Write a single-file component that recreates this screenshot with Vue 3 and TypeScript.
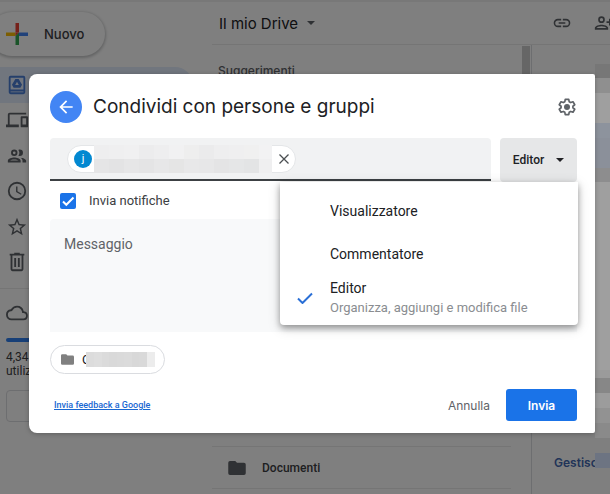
<script setup lang="ts">
import { computed, ref } from 'vue'

interface Role {
  id: string
  label: string
  description?: string
}

interface NavItem {
  label: string
  path: string
  active?: boolean
}

interface Tile {
  height: number
  color: string
}

const roles: Role[] = [
  { id: 'viewer', label: 'Visualizzatore' },
  { id: 'commenter', label: 'Commentatore' },
  { id: 'editor', label: 'Editor', description: 'Organizza, aggiungi e modifica file' },
]

const navItems: NavItem[] = [
  {
    label: 'Il mio Drive',
    active: true,
    path: 'M19 2H5a2 2 0 0 0-2 2v16a2 2 0 0 0 2 2h14a2 2 0 0 0 2-2V4a2 2 0 0 0-2-2zm0 18H5v-1h14v1zm0-3H5V4h14v13zM10.2 5.5h3.6l3.7 6.3-1.8 3.2H8.3l-1.8-3.2 3.7-6.3zm1.8 3-2 3.5h4l-2-3.5z',
  },
  {
    label: 'Computer',
    path: 'M4 6h18V4H4a2 2 0 0 0-2 2v11H0v3h14v-3H4V6zm19 2h-6a1 1 0 0 0-1 1v10a1 1 0 0 0 1 1h6a1 1 0 0 0 1-1V9a1 1 0 0 0-1-1zm-1 9h-4v-7h4v7z',
  },
  {
    label: 'Condivisi con me',
    path: 'M9 13.75c-2.34 0-7 1.17-7 3.5V19h14v-1.75c0-2.33-4.66-3.5-7-3.5zM4.34 17c.84-.58 2.87-1.25 4.66-1.25s3.82.67 4.66 1.25H4.34zM9 12a3.5 3.5 0 1 0 0-7 3.5 3.5 0 0 0 0 7zm0-5a1.5 1.5 0 1 1 0 3 1.5 1.5 0 0 1 0-3zm7.04 6.81c1.16.84 1.96 1.96 1.96 3.44V19h4v-1.75c0-2.02-3.5-3.17-5.96-3.44zM15 12a3.5 3.5 0 1 0 0-7c-.54 0-1.04.13-1.5.35a5.48 5.48 0 0 1 0 6.3c.46.22.96.35 1.5.35z',
  },
  {
    label: 'Recenti',
    path: 'M12 2a10 10 0 1 0 0 20 10 10 0 0 0 0-20zm0 18a8 8 0 1 1 0-16 8 8 0 0 1 0 16zm.5-13H11v6l5.25 3.15.75-1.23-4.5-2.67V7z',
  },
  {
    label: 'Speciali',
    path: 'm22 9.24-7.19-.62L12 2 9.19 8.63 2 9.24l5.46 4.73L5.82 21 12 17.27 18.18 21l-1.63-7.03L22 9.24zM12 15.4l-3.76 2.27 1-4.28-3.32-2.88 4.38-.38L12 6.1l1.71 4.04 4.38.38-3.32 2.88 1 4.28L12 15.4z',
  },
  {
    label: 'Cestino',
    path: 'M15 3V2H9v1H4v2h1v15a2 2 0 0 0 2 2h10a2 2 0 0 0 2-2V5h1V3h-5zm2 17H7V5h10v15zM9 7.5h2v10H9v-10zm4 0h2v10h-2v-10z',
  },
]

const nameTiles: string[] = [
  '#eeeeef', '#efeff0', '#f0f0f1', '#ececed', '#eeeeef', '#f1f1f2', '#eeeeee', '#ebebec', '#eeeeef', '#efeff0', '#f0f0f0', '#f2f2f3',
  '#e5e5e6', '#e3e3e4', '#e6e6e7', '#e4e4e5', '#e7e7e8', '#e5e5e5', '#e8e8e9', '#e7e7e8', '#e4e4e5', '#e5e6e7', '#e3e4e5', '#efeff0',
]

const folderTiles: string[] = ['#dcdcdc', '#dedede', '#dbdbdb', '#d9d9d9', '#dadada', '#dbdbdb', '#d8d8d8', '#d9d9d9', '#ececec']

const edgeTiles: Tile[] = [
  { height: 14, color: '#777777' },
  { height: 15, color: '#8f8f8f' },
  { height: 30, color: '#9f9f9f' },
  { height: 15, color: '#8d939d' },
  { height: 30, color: '#8b909a' },
  { height: 14, color: '#8d8d8e' },
  { height: 188, color: '#9f9f9f' },
  { height: 8, color: '#9b9b9b' },
  { height: 15, color: '#878787' },
  { height: 15, color: '#9c9c9c' },
  { height: 15, color: '#929292' },
  { height: 15, color: '#8a8a8a' },
  { height: 15, color: '#7f7f7f' },
  { height: 15, color: '#6d7482' },
  { height: 26, color: '#7f7f7f' },
]

const selectedId = ref('editor')
const menuOpen = ref(true)
const notify = ref(true)
const message = ref('')
const recipient = ref('')

const selectedRole = computed(() => roles.find((r) => r.id === selectedId.value) ?? roles[0])

function choose(role: Role): void {
  selectedId.value = role.id
  menuOpen.value = false
}
</script>

<template>
  <div class="page">
    <div class="drive">
      <aside class="sidebar">
        <button class="new-button" type="button">
          <svg class="plus" viewBox="0 0 22 22" aria-hidden="true">
            <path fill="#ea4335" d="M9.500 0h3.500v9.500H9.500z" />
            <path fill="#4285f4" d="M13 9.500h9V13h-9z" />
            <path fill="#34a853" d="M9.500 13H13v9H9.500z" />
            <path fill="#fbbc04" d="M0 9.500h9.500V13H0z" />
            <path fill="#ea4335" d="M9.500 9.500H13L9.500 13z" />
            <path fill="#34a853" d="M13 9.500V13H9.500z" />
          </svg>
          <span>Nuovo</span>
        </button>
        <nav class="nav">
          <a
            v-for="item in navItems"
            :key="item.label"
            class="nav-item"
            :class="{ active: item.active }"
            href="#"
            :aria-label="item.label"
          >
            <svg class="icon" viewBox="0 0 24 24" aria-hidden="true"><path :d="item.path" /></svg>
          </a>
        </nav>
        <div class="storage">
          <svg class="icon cloud" viewBox="0 0 24 24" aria-hidden="true">
            <path d="M19.35 10.04A7.49 7.49 0 0 0 12 4C9.11 4 6.6 5.64 5.35 8.04A5.99 5.99 0 0 0 0 14a6 6 0 0 0 6 6h13a5 5 0 0 0 .35-9.96zM19 18H6a4 4 0 0 1-.44-7.97l1.07-.11.5-.95A5.47 5.47 0 0 1 12 6c2.62 0 4.88 1.86 5.39 4.43l.3 1.5 1.53.11A2.98 2.98 0 0 1 22 15c0 1.65-1.35 3-3 3z" />
          </svg>
          <div class="meter"></div>
          <p class="usage">4,34 GB<br />utilizzati</p>
          <button class="buy" type="button" aria-label="Spazio"></button>
        </div>
      </aside>

      <div class="content">
        <header class="toolbar">
          <button class="crumb" type="button">
            <span>Il mio Drive</span>
            <svg class="caret" viewBox="0 0 10 5" aria-hidden="true"><path d="M0 0h10L5 5z" /></svg>
          </button>
          <div class="tools">
            <svg class="icon tool" viewBox="0 0 24 24" aria-hidden="true">
              <path d="M3.9 12c0-1.71 1.39-3.1 3.1-3.1h4V7H7a5 5 0 0 0 0 10h4v-1.900H7A3.100 3.100 0 0 1 3.900 12zM8 13h8v-2H8v2zm9-6h-4v1.900h4a3.100 3.100 0 0 1 0 6.200h-4V17h4a5 5 0 0 0 0-10z" />
            </svg>
            <svg class="icon tool" viewBox="0 0 24 24" aria-hidden="true">
              <path d="M9 12a4 4 0 1 0 0-8 4 4 0 0 0 0 8zm0-6a2 2 0 1 1 0 4 2 2 0 0 1 0-4zm0 8c-2.67 0-8 1.34-8 4v2h16v-2c0-2.66-5.33-4-8-4zm-6 4c.22-.72 3.31-2 6-2s5.8 1.29 6 2H3zM20 10V7h-2v3h-3v2h3v3h2v-3h3v-2h-3z" />
            </svg>
          </div>
        </header>
        <div class="body">
          <main class="files">
            <h2 class="suggested">Suggerimenti</h2>
            <div class="scroll-thumb"></div>
            <div class="file-row">
              <svg class="icon folder-big" viewBox="2 4 20 16" aria-hidden="true">
                <path d="M10 4H4a2 2 0 0 0-2 2v12a2 2 0 0 0 2 2h16a2 2 0 0 0 2-2V8a2 2 0 0 0-2-2h-8l-2-2z" />
              </svg>
              <span>Documenti</span>
            </div>
          </main>
          <aside class="details">
            <a href="#" class="manage">Gestisci</a>
          </aside>
        </div>
      </div>
    </div>

    <div class="backdrop">
      <div class="edge" aria-hidden="true">
        <i v-for="(tile, i) in edgeTiles" :key="i" :style="{ height: tile.height + 'px', background: tile.color }"></i>
      </div>
      <section class="dialog" role="dialog" aria-labelledby="dialog-title">
        <header class="dialog-head">
          <button class="back" type="button" aria-label="Indietro">
            <svg viewBox="0 0 24 24" aria-hidden="true"><path d="M20 11H7.83l5.59-5.59L12 4l-8 8 8 8 1.41-1.41L7.83 13H20v-2z" /></svg>
          </button>
          <h1 id="dialog-title">Condividi con persone e gruppi</h1>
          <button class="gear" type="button" aria-label="Impostazioni">
            <svg viewBox="0 0 24 24" aria-hidden="true">
              <path
                d="M9.9 2.8h4.2l.5 2.8 1.9 1.1 2.7-1 2.1 3.6-2.2 1.8v1.8l2.2 1.8-2.1 3.6-2.7-1-1.9 1.1-.5 2.8H9.9l-.5-2.8-1.9-1.1-2.7 1-2.1-3.6 2.2-1.8v-1.8L2.7 9.3l2.1-3.6 2.7 1 1.9-1.1z"
                fill="none"
                stroke="currentColor"
                stroke-width="2"
                stroke-linejoin="round"
              />
              <circle cx="12" cy="12" r="3.6" />
            </svg>
          </button>
        </header>

        <div class="share-row">
          <div class="people">
            <div class="person">
              <span class="avatar">j</span>
              <span class="name-tiles" aria-hidden="true">
                <i v-for="(color, i) in nameTiles" :key="i" :style="{ background: color }"></i>
              </span>
              <button class="remove" type="button" aria-label="Rimuovi">
                <svg viewBox="0 0 12 12" aria-hidden="true"><path d="M1.5 1.5l9 9M10.5 1.5l-9 9" /></svg>
              </button>
            </div>
            <input v-model="recipient" class="people-input" type="text" aria-label="Aggiungi persone" />
          </div>
          <div class="role">
            <button
              class="role-button"
              type="button"
              aria-haspopup="listbox"
              :aria-expanded="menuOpen"
              @click="menuOpen = !menuOpen"
            >
              <span>{{ selectedRole.label }}</span>
              <svg viewBox="0 0 8 4" aria-hidden="true"><path d="M0 0h8L4 4z" /></svg>
            </button>
            <div v-if="menuOpen" class="menu" role="listbox" aria-label="Ruolo">
              <button
                v-for="role in roles"
                :key="role.id"
                class="option"
                type="button"
                role="option"
                :aria-selected="role.id === selectedId"
                @click="choose(role)"
              >
                <span class="tick">
                  <svg v-if="role.id === selectedId" viewBox="0 0 16 12" aria-hidden="true"><path d="M1 6.5l4.5 4.5L15 1.5" /></svg>
                </span>
                <span class="option-text">
                  <span>{{ role.label }}</span>
                  <small v-if="role.description">{{ role.description }}</small>
                </span>
              </button>
            </div>
          </div>
        </div>

        <label class="notify">
          <input v-model="notify" type="checkbox" />
          <svg class="box" viewBox="0 0 16 16" aria-hidden="true"><path v-if="notify" d="M3 8.5l3.3 3.3L13.5 4.5" /></svg>
          <span>Invia notifiche</span>
        </label>

        <textarea v-model="message" class="message" placeholder="Messaggio" aria-label="Messaggio"></textarea>

        <div class="item-chip">
          <svg class="folder-small" viewBox="2 4 20 16" aria-hidden="true">
            <path d="M10 4H4a2 2 0 0 0-2 2v12a2 2 0 0 0 2 2h16a2 2 0 0 0 2-2V8a2 2 0 0 0-2-2h-8l-2-2z" />
          </svg>
          <span class="item-name">C</span>
          <span class="item-tiles" aria-hidden="true">
            <i v-for="(color, i) in folderTiles" :key="i" :style="{ background: color }"></i>
          </span>
        </div>

        <footer class="dialog-foot">
          <a href="#" class="feedback">Invia feedback a Google</a>
          <button class="cancel" type="button">Annulla</button>
          <button class="send" type="button">Invia</button>
        </footer>
      </section>
    </div>
  </div>
</template>

<style>
body {
  margin: 0;
}
</style>

<style scoped>
.page,
.page * {
  box-sizing: border-box;
}

.page {
  position: relative;
  height: 100vh;
  overflow: hidden;
  font-family: Roboto, 'Liberation Sans', sans-serif;
  color: #202124;
}

button {
  border: 0;
  padding: 0;
  background: none;
  font: inherit;
  color: inherit;
  cursor: pointer;
}

.icon {
  fill: #5f6368;
  width: 22px;
  height: 22px;
  flex: none;
}

.drive {
  display: flex;
  height: 100%;
  background: #fff;
  border-top: 2px solid #f0f0f0;
}

.sidebar {
  width: 212px;
  flex: none;
  display: flex;
  flex-direction: column;
  padding-top: 10px;
}

.new-button {
  display: flex;
  align-items: center;
  gap: 16px;
  width: 115px;
  height: 44px;
  margin-left: -10px;
  padding-left: 16px;
  border-radius: 22px;
  box-shadow: 0 1px 3px 1px rgba(60, 64, 67, 0.3);
  font: 500 13px Inter, Roboto, sans-serif;
  color: #3c4043;
}

.plus {
  width: 22px;
  height: 22px;
}

.nav {
  display: flex;
  flex-direction: column;
  height: 233px;
  padding: 11px 19px 8px 0;
  border-bottom: 1px solid #ebebeb;
}

.nav-item {
  display: flex;
  flex: 1;
  align-items: center;
  padding-left: 6px;
  border-radius: 0 18px 18px 0;
}

.nav-item.active {
  background: #e2ecfd;
}

.nav-item.active .icon {
  fill: #4a7fd6;
}

.storage {
  padding: 13px 19px 0 6px;
}

.cloud {
  display: block;
}

.meter {
  height: 4px;
  margin-top: 14px;
  border-radius: 2px;
  background: #2f7fee;
}

.usage {
  margin: 8px 0 12px;
  font-size: 12px;
  line-height: 14px;
  color: #3c4043;
}

.buy {
  display: block;
  width: 100px;
  height: 32px;
  border: 1px solid #dadce0;
  border-radius: 4px;
}

.content {
  flex: 1;
  min-width: 0;
  display: flex;
  flex-direction: column;
}

.toolbar {
  display: flex;
  align-items: center;
  justify-content: space-between;
  height: 43px;
  padding-left: 7px;
  border-bottom: 1px solid #ebebeb;
}

.crumb {
  display: flex;
  align-items: center;
  gap: 9px;
  font: 400 15px Inter, Roboto, sans-serif;
}

.caret {
  width: 8px;
  height: 4px;
  fill: #5f6368;
}

.tools {
  display: flex;
  gap: 22px;
  margin-right: -4px;
}

.tool {
  width: 20px;
  height: 20px;
}

.body {
  flex: 1;
  display: flex;
  min-height: 0;
}

.files {
  position: relative;
  flex: 1;
  display: flex;
  flex-direction: column;
  justify-content: space-between;
}

.suggested {
  margin: 18px 6px 0;
  font: 500 12px/16px Inter, Roboto, sans-serif;
  color: #5f6368;
}

.scroll-thumb {
  position: absolute;
  top: 1px;
  right: 1px;
  width: 8px;
  height: 120px;
  background: #cdcdcd;
}

.file-row {
  display: flex;
  align-items: center;
  gap: 16px;
  height: 43px;
  margin: 0 20px 5px 0;
  padding-left: 16px;
  border-top: 1px solid #ebebeb;
  border-bottom: 1px solid #ebebeb;
  font-size: 12px;
  font-weight: 500;
  color: #3c4043;
}

.folder-big {
  width: 18px;
  height: 14px;
}

.details {
  width: 79px;
  flex: none;
  display: flex;
  align-items: flex-end;
  padding: 0 0 23px 22px;
  border-left: 1px solid #dadce0;
}

.manage {
  font: 600 12px/16px Inter, Roboto, sans-serif;
  color: #4368b0;
  text-decoration: none;
}

.backdrop {
  position: absolute;
  inset: 0;
  padding: 74px 15px 0 29px;
  background: rgba(0, 0, 0, 0.5);
}

.edge {
  position: absolute;
  top: 64px;
  right: 0;
  width: 15px;
}

.edge i {
  display: block;
}

.dialog {
  position: relative;
  display: flex;
  flex-direction: column;
  padding: 17px 18px 12px 21px;
  border-radius: 8px 2px 2px 8px;
  background: #fff;
  box-shadow: 0 1px 5px rgba(0, 0, 0, 0.25);
}

.dialog-head {
  display: flex;
  align-items: center;
  height: 32px;
}

.back {
  display: grid;
  place-items: center;
  width: 32px;
  height: 32px;
  border-radius: 50%;
  background: #4285f4;
}

.back svg {
  width: 20px;
  height: 20px;
  fill: #fff;
}

h1 {
  flex: 1;
  margin: 0 0 0 11px;
  font: 400 19px/28px Inter, Roboto, sans-serif;
  white-space: nowrap;
}

.gear {
  width: 20px;
  height: 20px;
  color: #5f6368;
}

.gear svg {
  display: block;
  width: 20px;
  height: 20px;
  fill: currentColor;
}

.share-row {
  display: flex;
  gap: 9px;
  margin-top: 15px;
}

.people {
  flex: 1;
  min-width: 0;
  display: flex;
  align-items: center;
  height: 43px;
  padding-left: 17px;
  border-bottom: 2px solid #3c4043;
  border-radius: 4px 4px 0 0;
  background: #f1f2f3;
}

.person {
  display: flex;
  align-items: center;
  height: 28px;
  padding-left: 6px;
  border: 1px solid #e4e6e8;
  border-radius: 14px;
  background: #fff;
}

.avatar {
  width: 18px;
  height: 18px;
  margin-right: 2px;
  border-radius: 50%;
  background: #0288d1;
  color: #fff;
  font-size: 11px;
  line-height: 18px;
  text-align: center;
}

.name-tiles {
  display: grid;
  grid-template-columns: repeat(12, 15px);
  grid-auto-rows: 14px;
  width: 178px;
  overflow: hidden;
}

.remove {
  display: grid;
  place-items: center;
  width: 23px;
  height: 26px;
}

.remove svg {
  width: 12px;
  height: 12px;
  fill: none;
  stroke: #4b4f52;
  stroke-width: 1.3;
}

.people-input {
  flex: 1;
  min-width: 0;
  height: 28px;
  border: 0;
  outline: 0;
  background: transparent;
}

.role {
  position: relative;
}

.role-button {
  display: flex;
  align-items: center;
  justify-content: center;
  gap: 12px;
  width: 77px;
  height: 44px;
  border-radius: 4px;
  background: #e6e7e8;
  font-size: 12px;
  font-weight: 500;
}

.role-button svg {
  width: 8px;
  height: 4px;
  fill: #202124;
}

.menu {
  position: absolute;
  z-index: 1;
  top: 44px;
  right: -1px;
  width: 298px;
  padding: 8px 0 6px;
  border-radius: 0 0 4px 4px;
  background: #fff;
  box-shadow: 0 3px 6px rgba(0, 0, 0, 0.35), 0 3px 14px rgba(0, 0, 0, 0.14);
}

.option {
  display: flex;
  align-items: center;
  width: 100%;
  height: 43px;
  text-align: left;
  font-size: 14px;
  line-height: 19px;
}

.option:hover {
  background: #f5f5f5;
}

.tick {
  width: 50px;
  padding-left: 17px;
}

.tick svg {
  display: block;
  width: 16px;
  height: 12px;
  fill: none;
  stroke: #2a6fd6;
  stroke-width: 2;
}

.option-text {
  display: flex;
  flex-direction: column;
}

.option-text small {
  font-size: 13px;
  color: #8a8d91;
}

.notify {
  position: relative;
  display: flex;
  align-items: center;
  align-self: flex-start;
  gap: 13px;
  height: 37px;
  padding-left: 10px;
  font-size: 13px;
  color: #3c4043;
}

.notify input {
  position: absolute;
  width: 16px;
  height: 16px;
  margin: 0;
  opacity: 0;
}

.box {
  width: 16px;
  height: 16px;
  border-radius: 2px;
  background: #1a73e8;
  fill: none;
  stroke: #fff;
  stroke-width: 2;
}

.message {
  display: block;
  width: 100%;
  height: 113px;
  padding: 16px 14px;
  border: 0;
  border-radius: 4px 4px 0 0;
  outline: 0;
  resize: none;
  background: #f8f9fa;
  font: 400 14px/18px Roboto, sans-serif;
  color: #202124;
}

.message::placeholder {
  color: #5f6368;
  opacity: 1;
}

.item-chip {
  display: flex;
  align-items: center;
  align-self: flex-start;
  width: 115px;
  height: 29px;
  margin-top: 13px;
  padding-left: 10px;
  border: 1px solid #dadce0;
  border-radius: 15px;
  font-size: 13px;
}

.folder-small {
  width: 13px;
  height: 11px;
  flex: none;
  fill: #808080;
}

.item-name {
  margin-left: 8px;
}

.item-tiles {
  display: flex;
  width: 68px;
  height: 15px;
  margin-left: -4px;
}

.item-tiles i {
  flex: 1;
}

.dialog-foot {
  display: flex;
  align-items: center;
  height: 32px;
  margin-top: 15px;
  padding-left: 4px;
}

.feedback {
  margin-right: auto;
  font-size: 9px;
  font-weight: 500;
  color: #1967d2;
}

.cancel {
  font: 400 12px Inter, Roboto, sans-serif;
  color: #5f6368;
}

.send {
  width: 71px;
  height: 32px;
  margin-left: 16px;
  border-radius: 3px;
  background: #1a73e8;
  color: #fff;
  font: 600 12px Inter, Roboto, sans-serif;
}
</style>
